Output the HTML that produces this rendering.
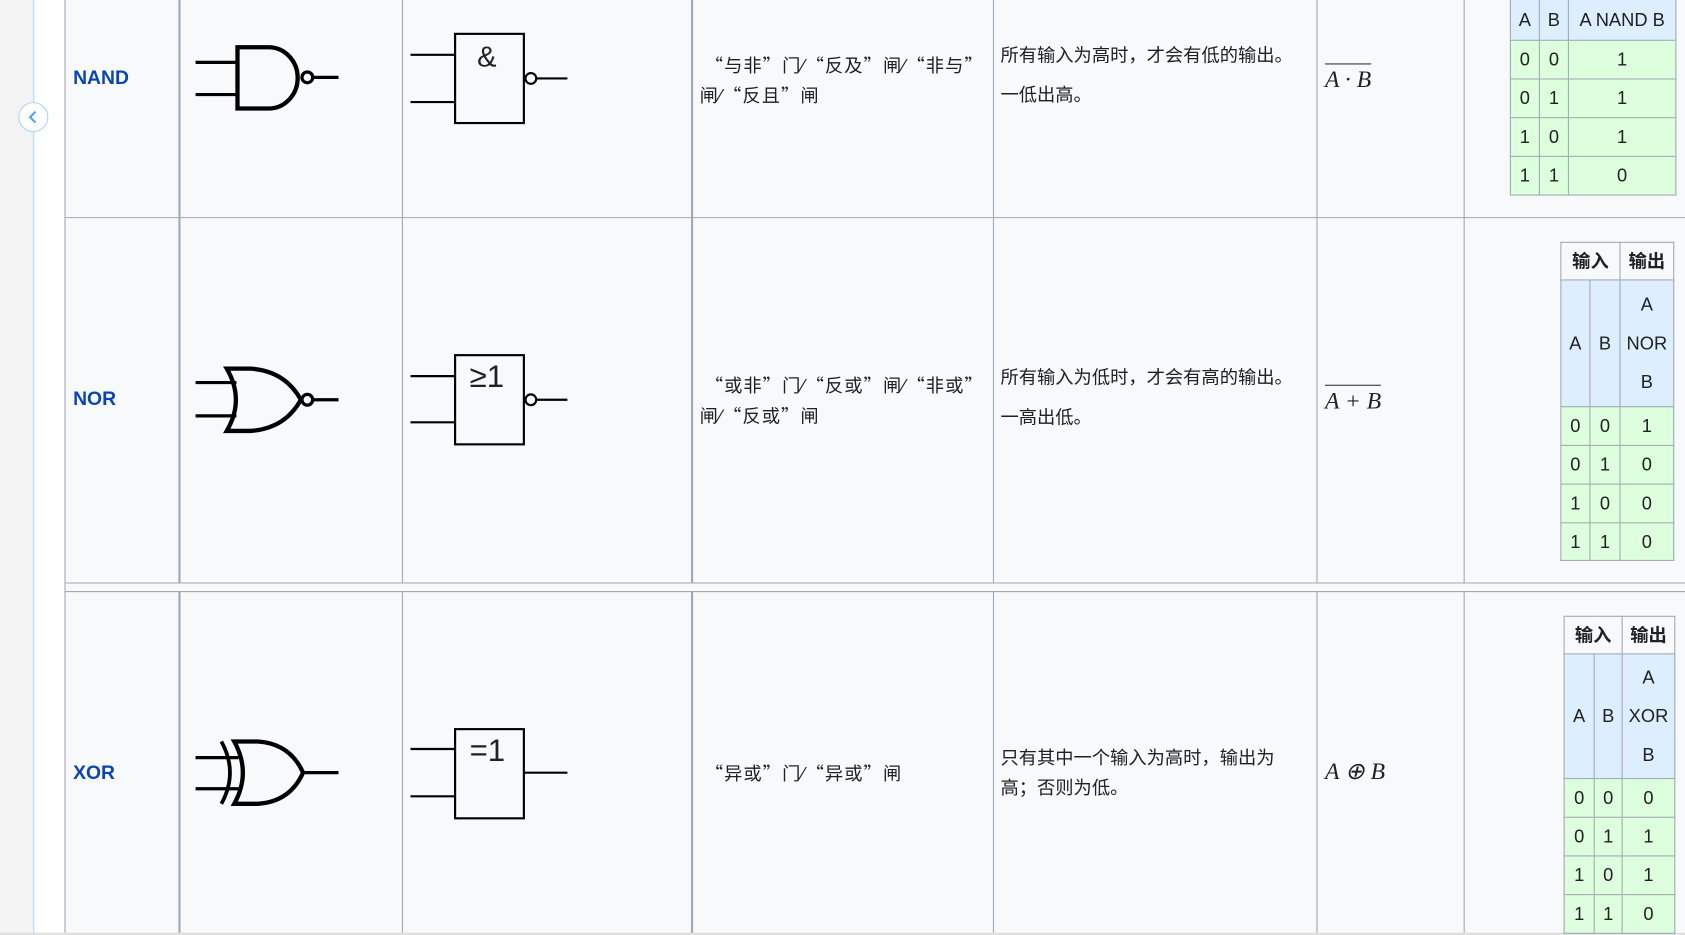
<!DOCTYPE html>
<html><head><meta charset="utf-8">
<style>
html,body{margin:0;padding:0;width:1685px;height:935px;overflow:hidden;background:#f3f3f3;}
#w{position:absolute;left:0;top:0;width:1568px;height:870px;transform:scale(1.07462);transform-origin:0 0;font-family:"Liberation Sans","Noto Sans CJK SC",sans-serif;color:#202122;}
.a{position:absolute;}
.zh{font-size:17px;white-space:nowrap;}
.cj{font-family:"Noto Sans CJK SC",sans-serif;font-size:17px;letter-spacing:1px;}
.lbl{font-size:18px;font-weight:bold;color:#0b45b0;}
.f{font-family:"Liberation Serif",serif;font-style:italic;font-size:22px;white-space:nowrap;}
.ov{border-top:1.5px solid #333;padding-top:1px;}
table.t{position:absolute;border-collapse:collapse;font-size:17px;text-align:center;}
table.t td{border:1.5px solid #a2a9b1;padding:0;line-height:1;}
.h{background:#f8f9fa;font-weight:bold;}
.b{background:#ddeeff;}
.g{background:#ddffdd;}
</style></head><body>
<div id="w">
<div class="a" style="left:0;top:0;width:31px;height:870px;background:#f3f3f3"></div>
<div class="a" style="left:31px;top:0;width:1px;height:870px;background:#a8d5ff"></div>
<div class="a" style="left:32px;top:0;width:28px;height:870px;background:#fff"></div>
<div class="a" style="left:17px;top:95px;width:26px;height:26px;border:1px solid #a8d5ff;border-radius:50%;background:#fff"></div>
<svg class="a" style="left:25px;top:102px" width="12" height="14"><path d="M8,2 L3,7 L8,12" fill="none" stroke="#4da3ff" stroke-width="2"/></svg>
<div class="a" style="left:60px;top:0;width:1508px;height:868px;background:#f8f9fa"></div>
<svg class="a" style="left:0;top:0" width="1568" height="870">
<g stroke="#a2a9b1" stroke-width="1">
<line x1="60.5" y1="0" x2="60.5" y2="868"/>
<line x1="374.5" y1="0" x2="374.5" y2="542"/><line x1="374.5" y1="550" x2="374.5" y2="868"/>
<line x1="924.5" y1="0" x2="924.5" y2="542"/><line x1="924.5" y1="550" x2="924.5" y2="868"/>
<line x1="1225.5" y1="0" x2="1225.5" y2="542"/><line x1="1225.5" y1="550" x2="1225.5" y2="868"/>
<line x1="1362.5" y1="0" x2="1362.5" y2="542"/><line x1="1362.5" y1="550" x2="1362.5" y2="868"/>
<line x1="60" y1="202.5" x2="1568" y2="202.5"/>
<line x1="60" y1="542.5" x2="1568" y2="542.5"/>
<line x1="60" y1="550.5" x2="1568" y2="550.5"/>
</g>
<g stroke="#a2a9b1" stroke-width="2">
<line x1="167" y1="0" x2="167" y2="542"/><line x1="167" y1="550" x2="167" y2="868"/>
<line x1="644" y1="0" x2="644" y2="542"/><line x1="644" y1="550" x2="644" y2="868"/>
</g>
<line x1="0" y1="869" x2="1568" y2="869" stroke="#ddd" stroke-width="2"/>
<g fill="none" stroke="#000">
<path d="M182,58H221M182,88H221" stroke-width="3"/>
<path d="M221,44H250A27,28.5 0 0 1 250,101H221Z" stroke-width="4"/>
<circle cx="286" cy="72" r="5" stroke-width="3"/>
<path d="M291,72H315" stroke-width="3"/>
<rect x="423.5" y="31.5" width="64" height="83" stroke-width="2"/>
<path d="M382,51H423M382,95H423M499,73H528" stroke-width="2"/>
<circle cx="494" cy="73" r="5" stroke-width="2"/>
<path d="M182,356H220M182,387H220" stroke-width="3"/>
<path d="M211,343H233Q265,345 280,372Q265,399 233,401H211Q228,372 211,343Z" stroke-width="4"/>
<circle cx="286" cy="372" r="5" stroke-width="3"/>
<path d="M291,372H315" stroke-width="3"/>
<rect x="423.5" y="330.5" width="64" height="83" stroke-width="2"/>
<path d="M382,350H423M382,393H423M499,372H528" stroke-width="2"/>
<circle cx="494" cy="372" r="5" stroke-width="2"/>
<path d="M182,705H222M182,734H222" stroke-width="3"/>
<path d="M218,690H240Q270,692 282,719Q270,746 240,748H218Q234,719 218,690Z" stroke-width="4"/>
<path d="M206,690Q222,719 206,748" stroke-width="3.5"/>
<path d="M282,719H315" stroke-width="3"/>
<rect x="423.5" y="678.5" width="64" height="83" stroke-width="2"/>
<path d="M382,697H423M382,741H423M488,719H528" stroke-width="2"/>
</g>
</svg>
<div class="a" style="left:444px;top:38px;font-size:27px">&amp;</div>
<div class="a" style="left:437px;top:335px;font-size:29px">≥1</div>
<div class="a" style="left:437px;top:683px;font-size:29px">=1</div>

<div class="a lbl" style="left:68px;top:62px">NAND</div>
<div class="a lbl" style="left:68px;top:361px">NOR</div>
<div class="a lbl" style="left:68px;top:709px">XOR</div>

<div class="a zh cj" style="left:651px;top:46px;line-height:28px">&nbsp;“与非”门⁄“反及”闸⁄“非与”<br>闸⁄“反且”闸</div>
<div class="a zh" style="left:931px;top:33px;line-height:37px">所有输入为高时，才会有低的输出。<br>一低出高。</div>
<div class="a zh cj" style="left:651px;top:344px;line-height:28px">&nbsp;“或非”门⁄“反或”闸⁄“非或”<br>闸⁄“反或”闸</div>
<div class="a zh" style="left:931px;top:333px;line-height:37px">所有输入为低时，才会有高的输出。<br>一高出低。</div>
<div class="a zh cj" style="left:651px;top:706px">&nbsp;“异或”门⁄“异或”闸</div>
<div class="a zh" style="left:931px;top:692px;line-height:28px">只有其中一个输入为高时，输出为<br>高；否则为低。</div>

<div class="a f" style="left:1233px;top:61px"><span class="ov">A · B</span></div>
<div class="a f" style="left:1233px;top:360px"><span class="ov">A + B</span></div>
<div class="a f" style="left:1233px;top:705px">A ⊕ B</div>

<table class="t" style="left:1405px;top:-1px;width:155px">
<tr style="height:38px" class="b"><td style="width:26px">A</td><td style="width:26px">B</td><td>A NAND B</td></tr>
<tr style="height:36px" class="g"><td>0</td><td>0</td><td>1</td></tr>
<tr style="height:36px" class="g"><td>0</td><td>1</td><td>1</td></tr>
<tr style="height:36px" class="g"><td>1</td><td>0</td><td>1</td></tr>
<tr style="height:36px" class="g"><td>1</td><td>1</td><td>0</td></tr>
</table>

<table class="t" style="left:1452px;top:225px;width:106px">
<tr style="height:35px" class="h"><td colspan="2">输入</td><td>输出</td></tr>
<tr style="height:118px" class="b"><td style="width:26px">A</td><td style="width:27px">B</td><td style="line-height:36px">A<br>NOR<br>B</td></tr>
<tr style="height:36px" class="g"><td>0</td><td>0</td><td>1</td></tr>
<tr style="height:36px" class="g"><td>0</td><td>1</td><td>0</td></tr>
<tr style="height:36px" class="g"><td>1</td><td>0</td><td>0</td></tr>
<tr style="height:35px" class="g"><td>1</td><td>1</td><td>0</td></tr>
</table>

<table class="t" style="left:1455px;top:573px;width:104px">
<tr style="height:35px" class="h"><td colspan="2">输入</td><td>输出</td></tr>
<tr style="height:116px" class="b"><td style="width:27px">A</td><td style="width:25px">B</td><td style="line-height:36px">A<br>XOR<br>B</td></tr>
<tr style="height:36px" class="g"><td>0</td><td>0</td><td>0</td></tr>
<tr style="height:36px" class="g"><td>0</td><td>1</td><td>1</td></tr>
<tr style="height:36px" class="g"><td>1</td><td>0</td><td>1</td></tr>
<tr style="height:36px" class="g"><td>1</td><td>1</td><td>0</td></tr>
</table>
</div>
</body></html>
